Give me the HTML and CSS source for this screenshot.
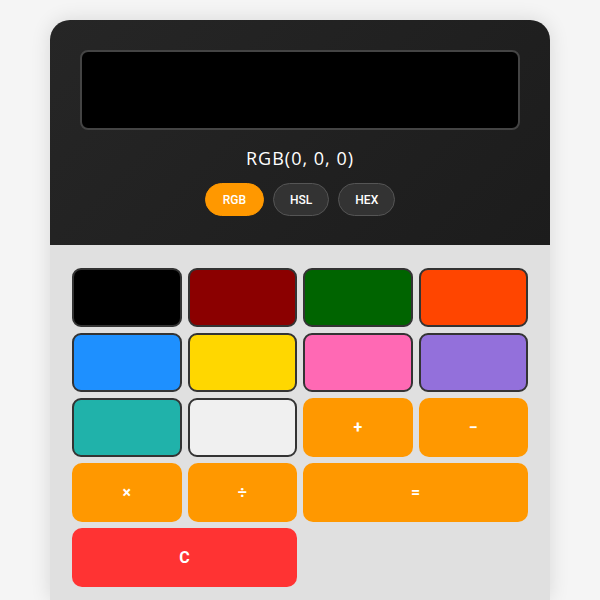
FILE: index.html
```html
<!DOCTYPE html>
<html lang="en">
<head>
    <meta charset="UTF-8">
    <meta name="viewport" content="width=device-width, initial-scale=1.0">
    <title>Color Calculator</title>
    <link rel="stylesheet" href="styles.css">
</head>
<body>
    <div class="calculator">
        <div class="calc-header">
            <div class="display" id="display"></div>
            <div class="color-value" id="colorValue">RGB(0, 0, 0)</div>
            <div class="mode-switch">
                <button class="mode-btn active">RGB</button>
                <button class="mode-btn">HSL</button>
                <button class="mode-btn">HEX</button>
            </div>
        </div>
        <div class="keypad">
            <button class="key swatch" style="background: #000000"></button>
            <button class="key swatch" style="background: #8b0000"></button>
            <button class="key swatch" style="background: #006400"></button>
            <button class="key swatch" style="background: #ff4500"></button>
            <button class="key swatch" style="background: #1e90ff"></button>
            <button class="key swatch" style="background: #ffd700"></button>
            <button class="key swatch" style="background: #ff69b4"></button>
            <button class="key swatch" style="background: #9370db"></button>
            <button class="key swatch" style="background: #20b2aa"></button>
            <button class="key swatch" style="background: #f0f0f0"></button>
            <button class="key op">+</button>
            <button class="key op">−</button>
            <button class="key op">×</button>
            <button class="key op">÷</button>
            <button class="key op wide">=</button>
            <button class="key clear wide">C</button>
        </div>
    </div>
</body>
</html>
```

FILE: styles.css
```css
* {
    margin: 0;
    padding: 0;
    box-sizing: border-box;
}
body {
    background: #f5f5f5;
    font-family: 'Roboto', sans-serif;
    display: flex;
    justify-content: center;
    padding-top: 20px;
    height: 600px;
    overflow: hidden;
}
.calculator {
    width: 500px;
    border-radius: 20px 20px 0 0;
    overflow: hidden;
    background: #e0e0e0;
    box-shadow: 0 0 20px rgba(0, 0, 0, 0.12);
}
.calc-header {
    background: linear-gradient(135deg, #262626, #1c1c1c);
    padding: 30px 30px 29px;
    text-align: center;
}
.display {
    height: 80px;
    background: #000;
    border: 2px solid #444;
    border-radius: 8px;
}
.color-value {
    margin-top: 16px;
    color: #fff;
    font-family: 'Open Sans', sans-serif;
    font-size: 18px;
    line-height: 24px;
    letter-spacing: 1px;
}
.mode-switch {
    margin-top: 13px;
    display: flex;
    justify-content: center;
    gap: 9px;
}
.mode-btn {
    height: 33px;
    padding: 0 16px;
    border-radius: 17px;
    border: 1px solid #555;
    background: #333;
    color: #fff;
    font-family: 'Roboto', sans-serif;
    font-size: 12px;
    font-weight: 500;
    cursor: pointer;
}
.mode-btn.active {
    background: #ff9800;
    border-color: #ff9800;
    padding: 0 17px;
}
.keypad {
    display: grid;
    grid-template-columns: repeat(4, 1fr);
    grid-auto-rows: 59px;
    gap: 6px;
    padding: 23px 22px 22px;
}
.key {
    border: none;
    border-radius: 10px;
    color: #fff;
    font-family: 'Roboto', sans-serif;
    font-size: 16px;
    font-weight: 700;
    cursor: pointer;
}
.key.swatch {
    border: 2px solid #333;
    border-radius: 9px;
}
.key.op {
    background: #ff9800;
}
.key.clear {
    background: #ff3333;
}
.key.wide {
    grid-column: span 2;
}
```
